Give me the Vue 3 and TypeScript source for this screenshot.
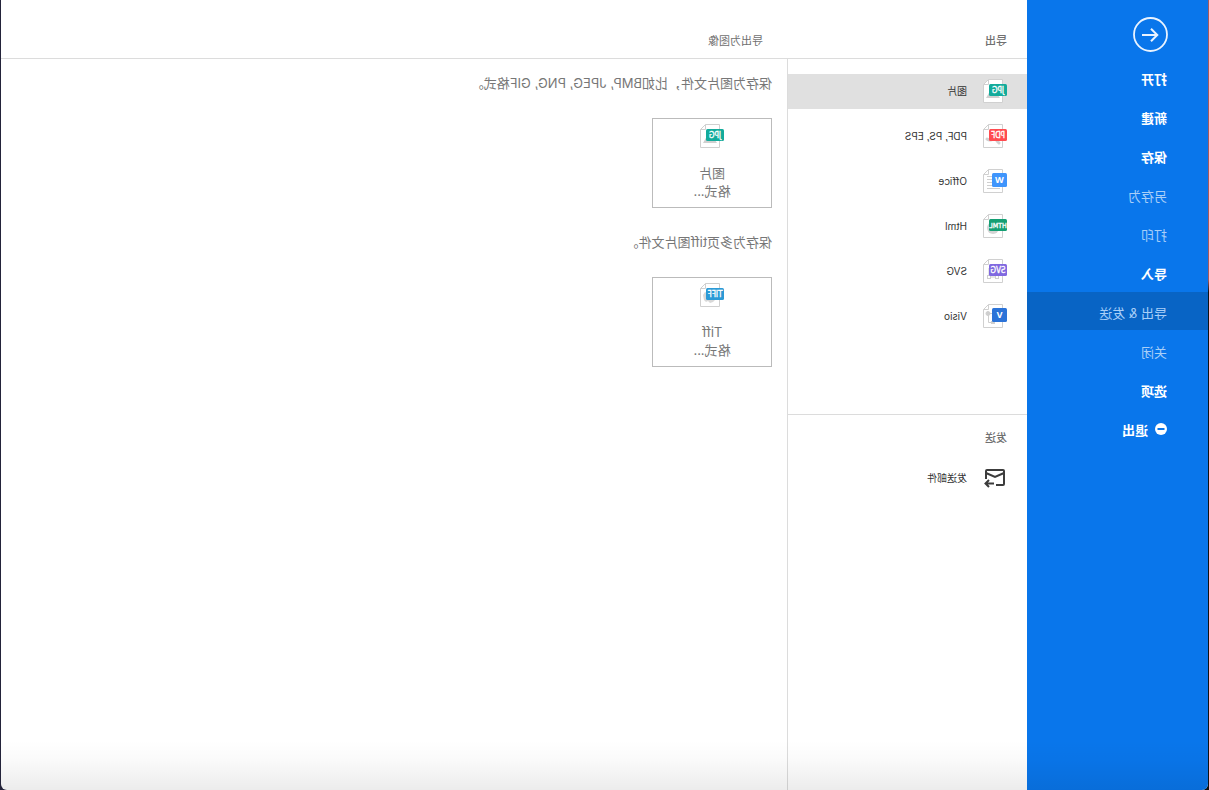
<script setup lang="ts">
import { ref } from 'vue'

interface MenuItem {
  label: string
  strong: boolean
  icon?: boolean
}

interface Format {
  kind: string
  label: string
}

const menu: MenuItem[] = [
  { label: '打开', strong: true },
  { label: '新建', strong: true },
  { label: '保存', strong: true },
  { label: '另存为', strong: false },
  { label: '打印', strong: false },
  { label: '导入', strong: true },
  { label: '导出 & 发送', strong: false },
  { label: '关闭', strong: false },
  { label: '选项', strong: true },
  { label: '退出', strong: true, icon: true },
]

const formats: Format[] = [
  { kind: 'JPG', label: '图片' },
  { kind: 'PDF', label: 'PDF, PS, EPS' },
  { kind: 'W', label: 'Office' },
  { kind: 'HTML', label: 'Html' },
  { kind: 'SVG', label: 'SVG' },
  { kind: 'V', label: 'Visio' },
]

const targets = [
  { kind: 'JPG', label: '图片', text: '保存为图片文件，比如BMP, JPEG, PNG, GIF格式。' },
  { kind: 'TIFF', label: 'Tiff', text: '保存为多页tiff图片文件。' },
]

const colors: Record<string, string> = {
  JPG: '#13ab9b',
  PDF: '#ff4b50',
  W: '#3f95fc',
  HTML: '#159f73',
  SVG: '#8069e0',
  V: '#2b73d8',
  TIFF: '#2b9ad6',
}

const activeMenu = ref('导出 & 发送')
const activeFormat = ref('JPG')

const isSquare = (kind: string): boolean => kind.length === 1
const badgeSize = (kind: string): number => {
  if (isSquare(kind)) return 9
  return kind === 'HTML' ? 7 : 8
}
</script>

<template>
  <div class="desktop">
    <div class="window">
      <nav class="sidebar">
        <button class="back" type="button" aria-label="返回">
          <svg width="35" height="35" viewBox="0 0 35 35" fill="none" stroke="#e9f3ff">
            <circle cx="17.5" cy="17.5" r="16.5" stroke-width="1.8" />
            <path d="M26 18H11M17 11.700L10.700 18L17 24.300" stroke-width="2" />
          </svg>
        </button>
        <button
          v-for="item in menu"
          :key="item.label"
          type="button"
          class="item"
          :class="{ strong: item.strong, active: activeMenu === item.label }"
          @click="activeMenu = item.label"
        >
          <svg v-if="item.icon" width="12" height="14" viewBox="0 0 12 14">
            <circle cx="6" cy="6" r="6" fill="#fff" />
            <path d="M2.500 6H9.500" stroke="#0a76ea" stroke-width="2" />
          </svg>
          <span>{{ item.label }}</span>
        </button>
      </nav>

      <div class="content">
        <header class="header">
          <h2 class="heading export">导出</h2>
          <h2 class="heading light">导出为图像</h2>
        </header>
        <div class="body">
          <aside class="list">
            <div class="formats">
              <button
                v-for="f in formats"
                :key="f.kind"
                type="button"
                class="row"
                :class="{ selected: activeFormat === f.kind }"
                @click="activeFormat = f.kind"
              >
                <svg width="24" height="24" viewBox="0 0 24 24">
                  <path d="M4.500 .5H18.500L23.500 5.500V23.500H4.500Z" fill="#fff" stroke="#d0d0d0" />
                  <path d="M18.500 .5V5.500H23.500" fill="none" stroke="#d0d0d0" />
                  <path v-if="f.kind === 'JPG'" d="M7 19L11 13L14 16L17 12L21 19Z" fill="#d0d0d0" />
                  <g v-else-if="f.kind === 'PDF'" fill="none" stroke="#d0d0d0" stroke-width="3" stroke-linecap="round">
                    <path d="M8 19L10 17M14 15Q17 17 20 15" />
                  </g>
                  <path v-else-if="f.kind === 'W'" d="M7 7.500H20M7 10.500H20M7 13.500H20M7 16.500H20M7 19.500H20" stroke="#cfcfcf" />
                  <circle v-else-if="f.kind === 'HTML'" cx="14" cy="14" r="6" fill="#d4d4d4" />
                  <g v-else-if="f.kind === 'SVG'" fill="none" stroke="#cfcfcf">
                    <path d="M10 9V16M18 9V16M11.500 18H16" />
                    <rect x="8.500" y="16.500" width="3" height="3" />
                    <rect x="16.500" y="16.500" width="3" height="3" />
                  </g>
                  <g v-else fill="#cfcfcf" stroke="#cfcfcf">
                    <path d="M19 9.500H14M18.500 10V18.500H15" fill="none" />
                    <circle cx="19" cy="9.500" r="2" />
                    <rect x="12.500" y="17.500" width="3" height="2" />
                  </g>
                  <rect x="0" :y="isSquare(f.kind) ? 4 : 5" :width="isSquare(f.kind) ? 15 : 18" :height="isSquare(f.kind) ? 14 : 12" rx="1.500" :fill="colors[f.kind]" />
                  <text
                    :x="isSquare(f.kind) ? 7.5 : 9"
                    :y="isSquare(f.kind) ? 14 : 14"
                    :font-size="badgeSize(f.kind)"
                    text-anchor="middle"
                    class="badge"
                    :class="{ bold: isSquare(f.kind) }"
                  >{{ f.kind }}</text>
                </svg>
                <span>{{ f.label }}</span>
              </button>
            </div>
            <section class="send">
              <h2 class="heading">发送</h2>
              <button type="button" class="row mail">
                <svg width="24" height="24" viewBox="0 0 24 24" fill="none" stroke="#3c3c3c" stroke-width="2">
                  <path d="M11 19H4Q3 19 3 18V5Q3 4 4 4H20Q21 4 21 5V13" />
                  <path d="M3 7L12 11L21 7" />
                  <path d="M13 17.500H21M18 14L21.500 17.500L18 21" />
                </svg>
                <span>发送邮件</span>
              </button>
            </section>
          </aside>

          <main class="main">
            <section v-for="t in targets" :key="t.kind" class="target">
              <p class="text">{{ t.text }}</p>
              <button type="button" class="card">
                <svg width="24" height="24" viewBox="0 0 24 24">
                  <path d="M4.500 .5H18.500L23.500 5.500V23.500H4.500Z" fill="#fff" stroke="#d0d0d0" />
                  <path d="M18.500 .5V5.500H23.500" fill="none" stroke="#d0d0d0" />
                  <path v-if="t.kind === 'JPG'" d="M7 19L11 13L14 16L17 12L21 19Z" fill="#d0d0d0" />
                  <path v-else d="M9 14L19 9L21 12L20 17L18 19L16 18L14 20L11 19L9 17Z" fill="#d8d8d8" />
                  <rect x="0" y="5" width="18" height="12" rx="1.500" :fill="colors[t.kind]" />
                  <text x="9" y="14" :font-size="badgeSize(t.kind)" text-anchor="middle" class="badge">{{ t.kind }}</text>
                </svg>
                <span class="caption">{{ t.label }}<br />格式...</span>
              </button>
            </section>
          </main>
        </div>
      </div>
    </div>
  </div>
</template>

<style>
body {
  margin: 0;
}
</style>

<style scoped>
/* The whole interface is drawn as a mirror image. */
.desktop {
  box-sizing: border-box;
  min-height: 100vh;
  display: flex;
  padding: 0 1px;
  transform: scaleX(-1);
  background: linear-gradient(to right, transparent 50%, #23233a 50%),
    linear-gradient(#a5595c 0, #a5595c 280px, #101010 292px);
  font-family: Inter, "Noto Sans CJK SC", sans-serif;
  color: #333;
}

.window {
  position: relative;
  flex: 1;
  display: flex;
  overflow: hidden;
  background: #fff;
  border-radius: 0 0 6px 6px;
}

.window::after {
  content: "";
  position: absolute;
  inset: auto 0 0;
  height: 50px;
  pointer-events: none;
  background: linear-gradient(transparent, rgba(0, 0, 0, 0.02) 40%, rgba(0, 0, 0, 0.075));
}

button {
  margin: 0;
  padding: 0;
  border: 0;
  background: none;
  font: inherit;
  color: inherit;
  text-align: left;
  cursor: pointer;
}

svg {
  display: block;
  flex: none;
}

.sidebar {
  box-sizing: border-box;
  width: 181px;
  flex: none;
  display: flex;
  flex-direction: column;
  gap: 1px;
  padding-top: 17px;
  background: #0976eb;
}

.back {
  align-self: flex-start;
  margin: 0 0 5px 40px;
}

.item {
  box-sizing: border-box;
  height: 38px;
  display: flex;
  align-items: center;
  gap: 7px;
  padding: 4px 0 0 41px;
  font-size: 13px;
  line-height: 20px;
  color: #a9cff8;
}

.item.strong {
  color: #fff;
  font-weight: 700;
}

.item.active {
  background: #0864c5;
}

.content {
  flex: 1;
  display: flex;
  flex-direction: column;
}

.header {
  box-sizing: border-box;
  height: 59px;
  display: flex;
  align-items: center;
  padding-top: 24px;
  border-bottom: 1px solid #dcdcdc;
}

.heading {
  margin: 0;
  font-size: 11px;
  line-height: 16px;
  font-weight: 500;
  color: #707070;
}

.heading.light {
  font-weight: 400;
}

.export {
  box-sizing: border-box;
  width: 264px;
  padding-left: 20px;
}

.body {
  flex: 1;
  display: flex;
}

.list {
  box-sizing: border-box;
  width: 240px;
  flex: none;
  border-right: 1px solid #dcdcdc;
}

.formats {
  display: flex;
  flex-direction: column;
  gap: 10px;
  padding: 15px 0 80px;
  border-bottom: 1px solid #dcdcdc;
}

.row {
  width: 100%;
  height: 35px;
  display: flex;
  align-items: center;
  gap: 16px;
  padding: 0 0 1px 20px;
  box-sizing: border-box;
  font-size: 10px;
  line-height: 16px;
}

.row.selected {
  background: #e0e0e0;
}

.send {
  padding-top: 15px;
}

.send .heading {
  padding-left: 20px;
}

.mail {
  margin-top: 15px;
}

.badge {
  fill: #fff;
  stroke: #fff;
  stroke-width: 0.3px;
  font-family: "Liberation Sans Narrow", "DejaVu Sans Condensed", sans-serif;
  font-weight: 400;
}

.badge.bold {
  stroke: none;
  font-family: "Open Sans", sans-serif;
  font-weight: 700;
}

.main {
  flex: 1;
  display: flex;
  flex-direction: column;
  gap: 24px;
  padding: 14px 15px;
}

.text {
  margin: 0;
  font-size: 13px;
  line-height: 20px;
  color: #777;
}

.card {
  box-sizing: border-box;
  width: 120px;
  height: 90px;
  margin-top: 25px;
  padding-top: 5px;
  display: flex;
  flex-direction: column;
  align-items: center;
  gap: 16px;
  border: 1px solid #bbb;
  color: #777;
  text-align: center;
}

.caption {
  font-size: 13px;
  line-height: 18px;
}
</style>
